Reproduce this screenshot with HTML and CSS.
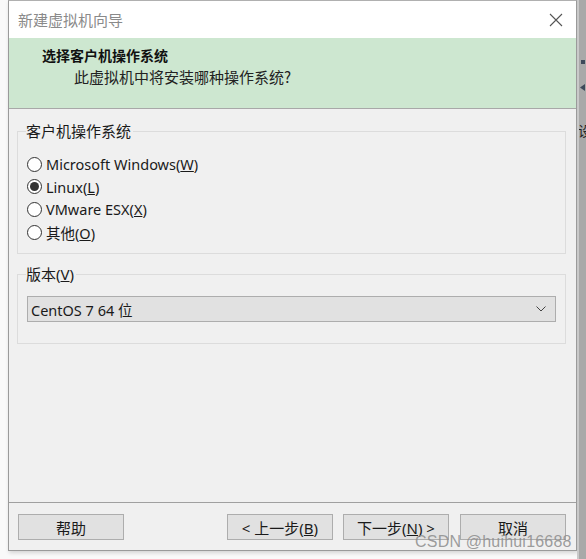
FILE: index.html
```html
<!DOCTYPE html>
<html lang="zh-CN">
<head>
    <meta charset="UTF-8">
    <title>新建虚拟机向导</title>
    <link rel="stylesheet" href="styles.css">
</head>
<body>
    <div id="screen">
        <div class="dialog">
            <div class="titlebar">
                <span class="title">新建虚拟机向导</span>
                <svg class="close" width="14" height="14" viewBox="0 0 14 14">
                    <path d="M1 1 L13 13 M13 1 L1 13" stroke="#555" stroke-width="1.1" fill="none"/>
                </svg>
            </div>

            <div class="banner">
                <h1>选择客户机操作系统</h1>
                <p>此虚拟机中将安装哪种操作系统?</p>
            </div>

            <div class="content">
                <fieldset class="group">
                    <legend>客户机操作系统</legend>
                    <label class="radio"><span class="dot"></span><span>Microsoft Windows(<u>W</u>)</span></label>
                    <label class="radio checked"><span class="dot"></span><span>Linux(<u>L</u>)</span></label>
                    <label class="radio"><span class="dot"></span><span>VMware ESX(<u>X</u>)</span></label>
                    <label class="radio"><span class="dot"></span><span>其他(<u>O</u>)</span></label>
                </fieldset>

                <fieldset class="group version">
                    <legend>版本(<u>V</u>)</legend>
                    <div class="select">
                        <span>CentOS 7 64 位</span>
                        <svg width="10" height="6" viewBox="0 0 10 6">
                            <path d="M0.5 0.5 L5 5 L9.5 0.5" stroke="#444" stroke-width="1" fill="none"/>
                        </svg>
                    </div>
                </fieldset>
            </div>

            <div class="footer">
                <button class="btn">帮助</button>
                <div class="spacer"></div>
                <button class="btn">&lt; 上一步(<u>B</u>)</button>
                <button class="btn">下一步(<u>N</u>) &gt;</button>
                <button class="btn cancel">取消</button>
            </div>
        </div>

        <div class="side">
            <span class="mark sq"></span>
            <span class="mark arrow"></span>
            <span class="side-char">设</span>
        </div>
    </div>
    <div class="watermark">CSDN @huihui16688</div>
</body>
</html>
```

FILE: styles.css
```css
/* page */
body {
    margin: 0;
    background-color: #f9f9f9;
    font-family: "Noto Sans", "Noto Sans CJK SC", sans-serif;
    font-size: 14.5px;
    color: #1a1a1a;
}

#screen {
    display: flex;
    height: 559px;
    padding-left: 8px;
}

/* dialog window */
.dialog {
    width: 567px;
    height: 549px;
    border: 1px solid #9a9a9a;
    border-top: 1px solid #b0b0b0;
    background-color: #f0f0f0;
    display: flex;
    flex-direction: column;
    box-shadow: 1px 2px 4px rgba(0, 0, 0, 0.15);
}

.titlebar {
    height: 37px;
    background-color: #fff;
    display: flex;
    align-items: center;
    justify-content: space-between;
    padding: 0 13px 0 9px;
}

.title {
    color: #8a8a8a;
    font-family: "Noto Sans CJK SC", sans-serif;
    font-size: 15px;
}

.banner {
    height: 71px;
    background-color: #cde7d0;
    border-bottom: 1px solid #a8a8a8;
    box-sizing: border-box;
    padding: 7px 0 0 33px;
}

.banner h1 {
    margin: 0;
    font-family: "Noto Sans CJK SC", sans-serif;
    font-size: 14px;
    font-weight: bold;
    line-height: 20px;
    color: #111;
}

.banner p {
    margin: 2px 0 0 32px;
    font-family: "Noto Sans CJK SC", sans-serif;
    font-size: 15px;
    line-height: 20px;
    color: #222;
}

.content {
    flex: 1;
    padding: 12px 10px 0 8px;
}

/* group boxes */
.group {
    margin: 0;
    border: 1px solid #dcdcdc;
    padding: 12px 9px 10px 9px;
}

.group legend {
    padding: 0 2px 0 0;
    margin-left: -1px;
    line-height: 20px;
    font-size: 15px;
    font-family: "Noto Sans", "Noto Sans CJK SC", sans-serif;
}

.radio {
    display: flex;
    align-items: center;
    height: 22.6px;
    gap: 4px;
}

.dot {
    width: 15px;
    height: 15px;
    border: 1px solid #333;
    border-radius: 50%;
    background-color: #fff;
    box-sizing: border-box;
    display: flex;
    align-items: center;
    justify-content: center;
}

.radio.checked .dot::after {
    content: "";
    width: 9px;
    height: 9px;
    border-radius: 50%;
    background-color: #333;
}

.version {
    margin-top: 10px;
    padding-top: 12px;
    padding-bottom: 21px;
}

.select {
    height: 26px;
    box-sizing: border-box;
    border: 1px solid #adadad;
    background-color: #e1e1e1;
    display: flex;
    align-items: center;
    justify-content: space-between;
    padding: 0 9px 0 3px;
}

/* footer buttons */
.footer {
    border-top: 1px solid #a0a0a0;
    height: 48px;
    box-sizing: border-box;
    display: flex;
    align-items: flex-start;
    padding: 11px 10px 0 9px;
    gap: 10px;
}

.spacer {
    flex: 1;
}

.btn {
    width: 106px;
    height: 26px;
    border: 1px solid #adadad;
    background-color: #e1e1e1;
    font-family: "Noto Sans", "Noto Sans CJK SC", sans-serif;
    font-size: 15px;
    color: #1a1a1a;
    padding: 0;
}

.cancel {
    margin-left: 1px;
}

/* background window on the right */
.side {
    flex: 1;
    background-color: #a9a9a9;
    position: relative;
    border-left: 2px solid #c9c9c9;
    overflow: hidden;
}

.mark {
    position: absolute;
    background-color: #3e4a5a;
}

.mark.sq {
    left: 2px;
    top: 60px;
    width: 4px;
    height: 4px;
}

.mark.arrow {
    left: 1px;
    top: 84px;
    width: 5px;
    height: 7px;
    clip-path: polygon(100% 0, 0 50%, 100% 100%);
}

.side-char {
    position: absolute;
    left: -1px;
    top: 120px;
    font-family: "Noto Sans CJK SC", sans-serif;
    font-size: 14px;
    color: #222;
}

.watermark {
    position: absolute;
    left: 415px;
    top: 533px;
    font-family: "Liberation Sans", sans-serif;
    font-size: 16px;
    color: rgba(140, 140, 140, 0.85);
    letter-spacing: 0.2px;
}
```
